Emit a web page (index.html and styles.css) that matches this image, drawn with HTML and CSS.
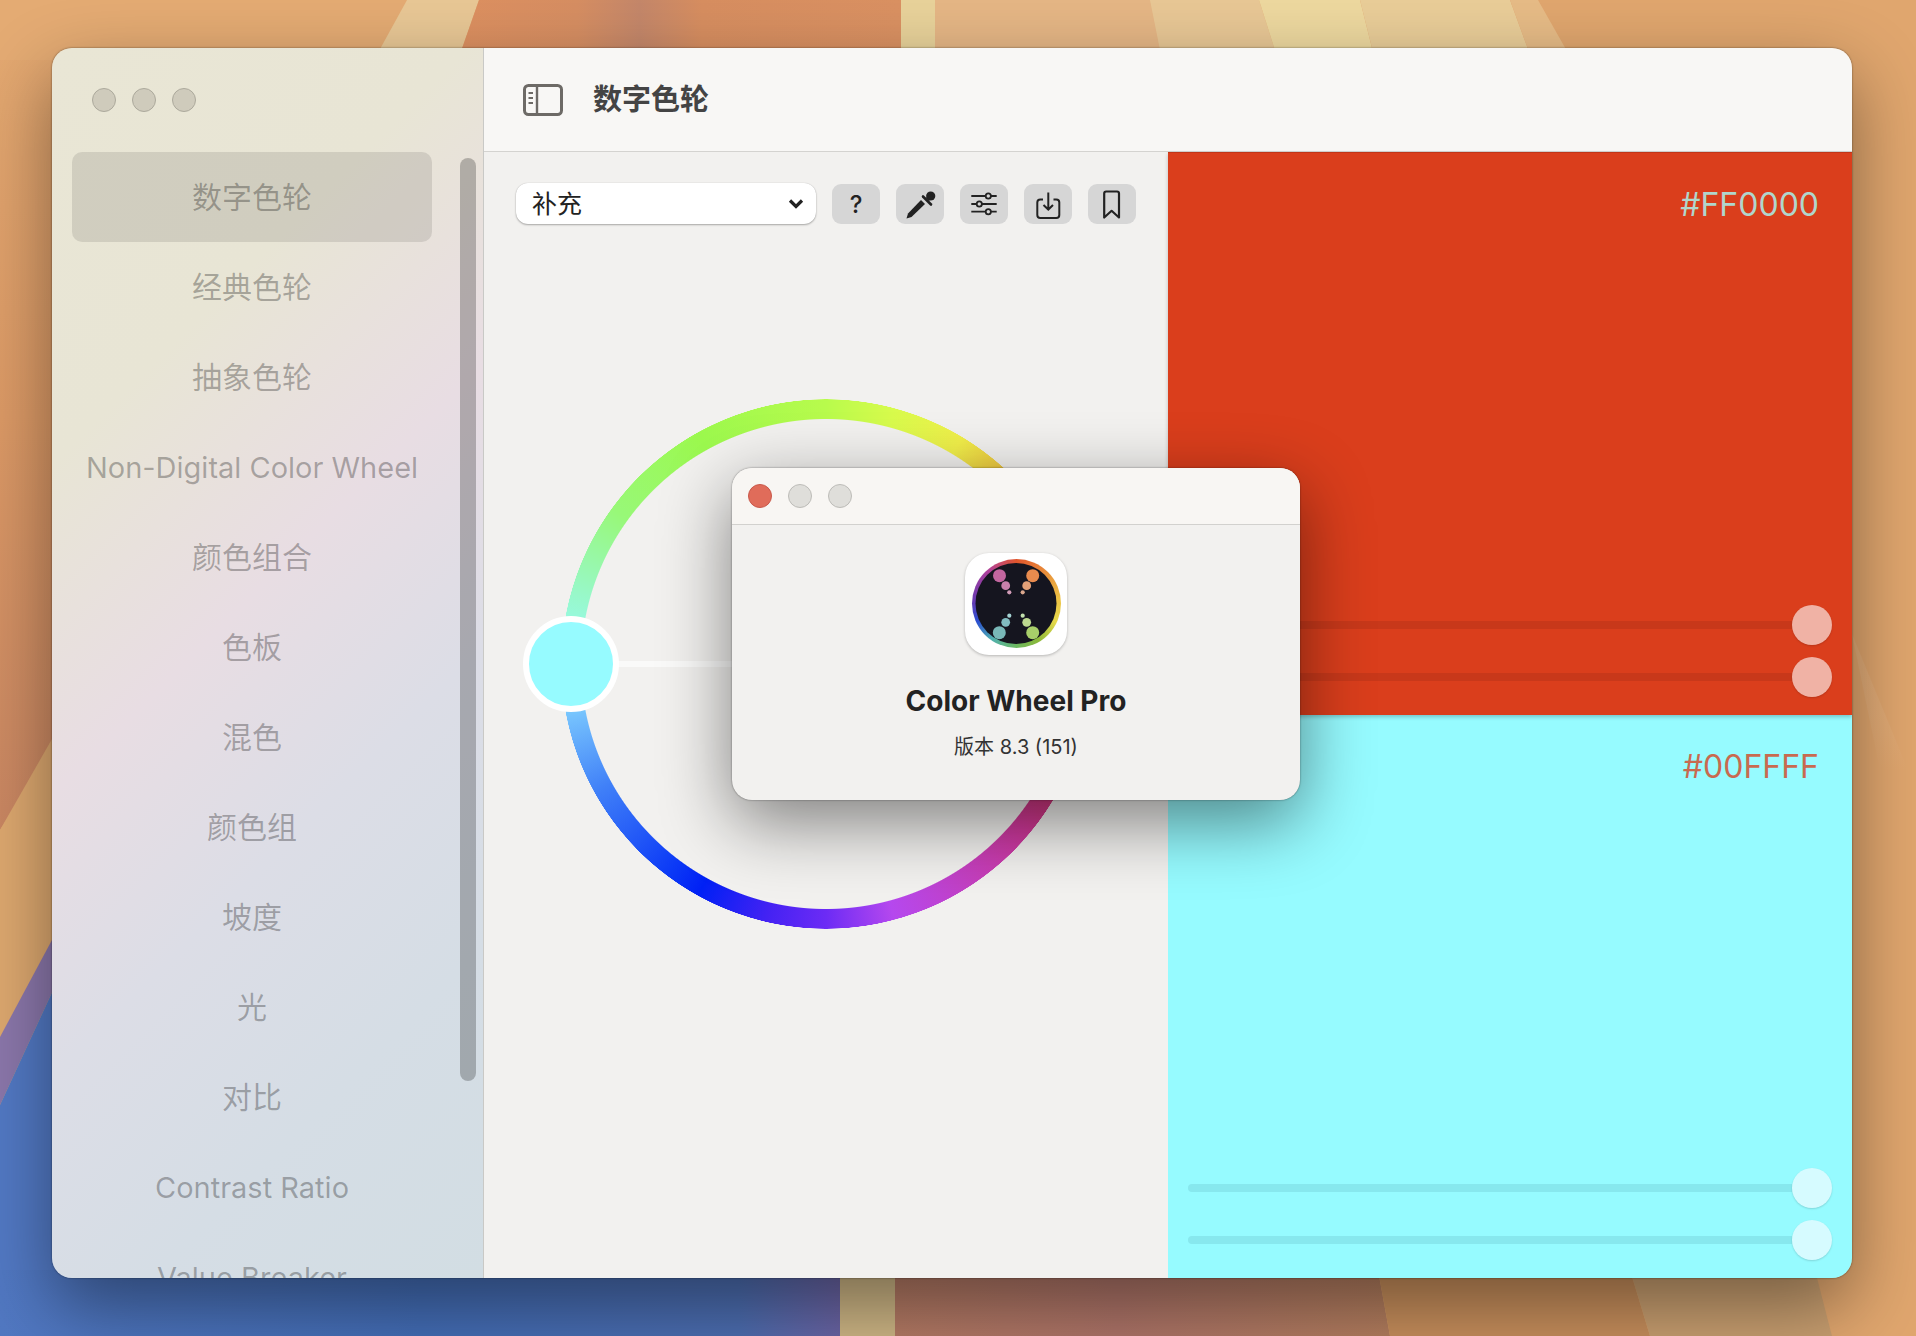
FILE: index.html
```html
<!DOCTYPE html>
<html lang="zh">
<head>
<meta charset="utf-8">
<title>Color Wheel Pro</title>
<link rel="stylesheet" href="styles.css">
</head>
<body>
<svg class="wallpaper" viewBox="0 0 1916 1336" aria-hidden="true">
  <defs>
    <linearGradient id="wpLeft" x1="0" y1="0" x2="0" y2="1"><stop offset="0" stop-color="#e4aa72"/><stop offset="0.5" stop-color="#dc9a66"/><stop offset="1" stop-color="#c98662"/></linearGradient>
    <linearGradient id="wpRed" x1="0" y1="0" x2="1" y2="0"><stop offset="0" stop-color="#dd9060"/><stop offset="0.27" stop-color="#d68e62"/><stop offset="0.41" stop-color="#c4876a"/><stop offset="0.55" stop-color="#d78e60"/><stop offset="1" stop-color="#da9162"/></linearGradient>
    <linearGradient id="wpBlue" x1="0" y1="0" x2="1" y2="0"><stop offset="0" stop-color="#5178c2"/><stop offset="0.5" stop-color="#436db6"/><stop offset="0.88" stop-color="#4c6db0"/><stop offset="1" stop-color="#6a64a4"/></linearGradient>
    <linearGradient id="wpBrown" x1="0" y1="0" x2="1" y2="0"><stop offset="0" stop-color="#b47a64"/><stop offset="0.45" stop-color="#ae7468"/><stop offset="1" stop-color="#b47e5e"/></linearGradient>
    <linearGradient id="wpStreak" x1="0" y1="0" x2="0" y2="1"><stop offset="0" stop-color="#e6b98c" stop-opacity=".35"/><stop offset="0.6" stop-color="#e6b98c" stop-opacity=".25"/><stop offset="1" stop-color="#e6b98c" stop-opacity="0"/></linearGradient>
  </defs>
  <rect width="1916" height="1336" fill="#e0a66e"/>
  <polygon points="0,0 60,0 60,734 0,830" fill="url(#wpLeft)"/>
  <polygon points="0,0 407,0 379,60 0,60" fill="#e4ab73"/>
  <polygon points="407,0 479,0 458,60 374,60" fill="#e8c795"/>
  <polygon points="479,0 901,0 901,60 458,60" fill="url(#wpRed)"/>
  <rect x="901" y="0" width="34" height="60" fill="#e8d29a"/>
  <rect x="935" y="0" width="225" height="60" fill="#e5b685"/>
  <polygon points="1150,0 1259,0 1278,60 1162,60" fill="#e8c795"/>
  <polygon points="1259,0 1360,0 1375,60 1278,60" fill="#edd89f"/>
  <polygon points="1360,0 1510,0 1532,60 1375,60" fill="#e9cd98"/>
  <polygon points="1510,0 1538,0 1572,60 1532,60" fill="#e6bb86"/>
  <polygon points="0,830 60,725 60,925 0,1037" fill="#dda86f"/>
  <polygon points="0,1037 60,925 60,975 0,1105" fill="#8b77ab"/>
  <polygon points="0,1105 60,975 60,1336 0,1336" fill="#5279c4"/>
  <polygon points="0,1270 840,1270 840,1336 0,1336" fill="url(#wpBlue)"/>
  <rect x="840" y="1270" width="55" height="66" fill="#ceb685"/>
  <polygon points="895,1270 1378,1270 1390,1336 895,1336" fill="url(#wpBrown)"/>
  <polygon points="1378,1270 1630,1270 1650,1336 1390,1336" fill="#c88f5c"/>
  <polygon points="1630,1270 1815,1270 1832,1336 1650,1336" fill="#c99f70"/>
  <polygon points="1852,634 1908,770 1880,770" fill="url(#wpStreak)"/>
</svg>

<main class="window">
  <aside class="sidebar">
    <div class="sidebar-lights">
      <span class="light light-side"></span>
      <span class="light light-side"></span>
      <span class="light light-side"></span>
    </div>
    <nav class="nav">
      <div class="nav-item nav-cjk nav-item-active">数字色轮</div>
      <div class="nav-item nav-cjk">经典色轮</div>
      <div class="nav-item nav-cjk">抽象色轮</div>
      <div class="nav-item nav-latin">Non-Digital Color Wheel</div>
      <div class="nav-item nav-cjk">颜色组合</div>
      <div class="nav-item nav-cjk">色板</div>
      <div class="nav-item nav-cjk">混色</div>
      <div class="nav-item nav-cjk">颜色组</div>
      <div class="nav-item nav-cjk">坡度</div>
      <div class="nav-item nav-cjk">光</div>
      <div class="nav-item nav-cjk">对比</div>
      <div class="nav-item nav-latin">Contrast Ratio</div>
      <div class="nav-item nav-latin">Value Breaker</div>
    </nav>
    <div class="scrollbar"></div>
  </aside>

  <section class="content">
    <header class="topbar">
      <svg class="sidebar-toggle" viewBox="0 0 40 32" aria-hidden="true">
        <rect x="1.5" y="1.5" width="37" height="29" rx="4" fill="none" stroke="#6d6a66" stroke-width="3"/>
        <path d="M14 2V30" stroke="#6d6a66" stroke-width="2.4"/>
        <path d="M5.5 9H10M5.5 14H10M5.5 19H10" stroke="#6d6a66" stroke-width="2"/>
      </svg>
      <h1 class="title">数字色轮</h1>
    </header>

    <div class="workspace">
      <div class="wheel-pane">
        <div class="toolbar">
          <div class="select">
            <span class="select-label">补充</span>
            <svg class="chevron" viewBox="0 0 16 10" aria-hidden="true"><path d="M2 1.5L8 7.5L14 1.5" fill="none" stroke="#222" stroke-width="3.2"/></svg>
          </div>
          <div class="tool tool-help">?</div>
          <div class="tool">
            <svg class="tool-icon" viewBox="0 0 48 40" aria-hidden="true">
              <circle cx="34.7" cy="12" r="4.6" fill="#222"/>
              <path d="M27 12.5L35 20.5" stroke="#222" stroke-width="2.6" stroke-linecap="round"/>
              <path d="M25 16L12 29.5L10.5 34.5L15.5 33L29 20Z" fill="#222"/>
              <path d="M32 12L35 15" stroke="#222" stroke-width="6"/>
            </svg>
          </div>
          <div class="tool">
            <svg class="tool-icon" viewBox="0 0 48 40" aria-hidden="true">
              <g fill="#d6d6d6" stroke="#222" stroke-width="1.8">
                <path d="M11.3 12H36.7M11.3 20H36.7M11.3 27.7H36.7" fill="none"/>
                <circle cx="28.3" cy="12" r="2.6"/>
                <circle cx="19.3" cy="20" r="2.6"/>
                <circle cx="28.3" cy="27.7" r="2.6"/>
              </g>
            </svg>
          </div>
          <div class="tool">
            <svg class="tool-icon" viewBox="0 0 48 40" aria-hidden="true">
              <g fill="none" stroke="#222" stroke-width="2">
                <path d="M19 15.5H16.3a3 3 0 0 0-3 3V31a3 3 0 0 0 3 3H32.3a3 3 0 0 0 3-3V18.5a3 3 0 0 0-3-3H29.5"/>
                <path d="M24.3 8.5V25.5M19.5 21L24.3 25.5L29 21"/>
              </g>
            </svg>
          </div>
          <div class="tool">
            <svg class="tool-icon" viewBox="0 0 48 40" aria-hidden="true">
              <path d="M16.2 33.5V9.5a2 2 0 0 1 2-2H29a2 2 0 0 1 2 2V33.5L23.6 26.8Z" fill="none" stroke="#222" stroke-width="2.2" stroke-linejoin="round"/>
            </svg>
          </div>
        </div>

        <div class="wheel">
          <div class="ring"></div>
          <div class="spoke"></div>
          <div class="handle"></div>
        </div>
      </div>

      <div class="swatches">
        <section class="swatch swatch-red">
          <div class="hex hex-red">#FF0000</div>
          <div class="sliders">
            <div class="slider"><div class="track track-red"></div><div class="thumb thumb-red"></div></div>
            <div class="slider"><div class="track track-red"></div><div class="thumb thumb-red"></div></div>
          </div>
        </section>
        <section class="swatch swatch-cyan">
          <div class="hex hex-cyan">#00FFFF</div>
          <div class="sliders">
            <div class="slider"><div class="track track-cyan"></div><div class="thumb thumb-cyan"></div></div>
            <div class="slider"><div class="track track-cyan"></div><div class="thumb thumb-cyan"></div></div>
          </div>
        </section>
      </div>
    </div>
  </section>

  <div class="about">
    <div class="about-bar">
      <span class="light light-close"></span>
      <span class="light light-idle"></span>
      <span class="light light-idle"></span>
    </div>
    <div class="about-body">
      <div class="app-icon">
        <div class="app-ring"></div>
        <svg class="app-face" viewBox="0 0 102 102" aria-hidden="true">
          <circle cx="51" cy="50.5" r="40.5" fill="#15151f"/>
          <circle cx="34.5" cy="22.7" r="6.5" fill="#c2669f"/>
          <circle cx="67.7" cy="22.7" r="6.5" fill="#e98b4e"/>
          <circle cx="40.7" cy="32.7" r="4.4" fill="#c880ab"/>
          <circle cx="61.7" cy="32.7" r="4.4" fill="#e2a078"/>
          <circle cx="44.3" cy="39.3" r="2.1" fill="#d29cb8"/>
          <circle cx="57.7" cy="39.3" r="2.1" fill="#dca88f"/>
          <circle cx="44.3" cy="62.7" r="2.1" fill="#a4d2d2"/>
          <circle cx="57.7" cy="62.7" r="2.1" fill="#c2e0ae"/>
          <circle cx="40.7" cy="69.3" r="4.4" fill="#82bcc0"/>
          <circle cx="61.7" cy="69.3" r="4.4" fill="#bcd890"/>
          <circle cx="34.3" cy="79.7" r="6.5" fill="#79b8b8"/>
          <circle cx="67.7" cy="79.7" r="6.5" fill="#a8cf6a"/>
        </svg>
      </div>
      <div class="app-name">Color Wheel Pro</div>
      <div class="app-version">版本 8.3 (151)</div>
    </div>
  </div>
</main>
</body>
</html>
```
FILE: styles.css
```css
* { box-sizing: border-box; }

html, body { margin: 0; height: 100%; }

body {
  position: relative;
  width: 1916px;
  height: 1336px;
  padding: 48px 64px 58px 52px;
  overflow: hidden;
  background: #e0a66e;
  font-family: Inter, "Noto Sans CJK SC", sans-serif;
}

.wallpaper { position: absolute; inset: 0; width: 1916px; height: 1336px; }

body::before {
  content: "";
  position: absolute;
  z-index: 1;
  left: 52px; top: 48px; width: 1800px; height: 1230px;
  border-radius: 20px;
  box-shadow: 0 28px 72px rgba(0, 0, 0, .42), 0 0 2px rgba(0, 0, 0, .55);
}

.window {
  position: relative;
  z-index: 2;
  display: flex;
  height: 100%;
  border-radius: 20px;
  overflow: hidden;
}

.sidebar {
  position: relative;
  flex: 0 0 432px;
  overflow: hidden;
  border-right: 1px solid #c9c9c6;
  background: linear-gradient(135deg, #e9e6d5 0%, #e8e5d5 25%, #e8dde3 45%, #dcdde6 62%, #d5dde5 80%, #d2dde3 100%);
}

.sidebar-lights, .about-bar { display: flex; align-items: center; gap: 16px; }
.sidebar-lights { height: 104px; padding-left: 40px; }

.light { width: 24px; height: 24px; border-radius: 50%; }
.light-side { background: #cfcbbc; border: 1px solid #aca99c; }
.light-close { background: #e06c5a; border: 1px solid #c9584a; }
.light-idle { background: #dfdeda; border: 1px solid #bdbcb8; }

.nav { width: 380px; padding-left: 20px; }

.nav-item {
  display: flex;
  align-items: center;
  justify-content: center;
  height: 90px;
  border-radius: 10px;
  color: rgba(0, 0, 0, .29);
  white-space: nowrap;
}
.nav-cjk { padding-bottom: 5px; font-size: 30px; }
.nav-latin { font-size: 29px; }
.nav-item-active { background: rgba(0, 0, 0, .1); }

.scrollbar {
  position: absolute;
  left: 408px; top: 110px;
  width: 16px; height: 923px;
  border-radius: 8px;
  background: rgba(0, 0, 0, .24);
}

.content { flex: 1; display: flex; flex-direction: column; min-width: 0; }

.topbar {
  flex: 0 0 104px;
  display: flex;
  align-items: center;
  padding-left: 39px;
  background: #f8f7f5;
  border-bottom: 1px solid #d4d3d0;
}
.sidebar-toggle { width: 40px; height: 32px; }
.title { margin: 0 0 5px 30px; font-size: 29px; font-weight: 700; color: #444; }

.workspace { flex: 1; display: flex; min-height: 0; }

.wheel-pane {
  flex: 0 0 684px;
  display: flex;
  flex-direction: column;
  padding: 31px 32px 0;
  background: #f2f1ef;
}

.toolbar { display: flex; align-items: flex-start; gap: 16px; }

.select {
  display: flex;
  align-items: center;
  justify-content: space-between;
  width: 300px; height: 41px;
  padding: 0 12px 0 16px;
  border-radius: 12px;
  background: #fff;
  box-shadow: 0 1px 2px rgba(0, 0, 0, .3), 0 0 1px rgba(0, 0, 0, .2);
  color: #222;
  font-size: 25px;
}
.select-label { margin-bottom: 4px; }
.chevron { width: 16px; height: 10px; }

.tool {
  display: flex;
  align-items: center;
  justify-content: center;
  width: 48px; height: 40px;
  margin-top: 1px;
  border-radius: 9px;
  background: #d6d6d6;
}
.tool-help { color: #222; font-size: 24px; font-weight: 500; }
.tool-icon { width: 48px; height: 40px; }

.wheel { position: relative; align-self: center; width: 530px; height: 530px; margin-top: 175px; }

.ring {
  position: absolute;
  inset: 0;
  border-radius: 50%;
  background: conic-gradient(#b8fb4c 0deg, #d8fb4c 15deg, #f2f04a 31deg, #f0c840 42deg, #f09a3a 62deg, #e03a20 90deg, #d0389a 130deg, #b548ee 165deg, #6c2bf5 180deg, #4422f3 193deg, #0020f5 209deg, #0c3af6 217deg, #4080f8 241deg, #74c0fd 258deg, #96fbff 270deg, #98f8c8 286deg, #98f878 306deg, #9cf94e 331deg, #b8fb4c 360deg);
  -webkit-mask: radial-gradient(closest-side, transparent 244.5px, #000 245.5px, #000 264.5px, transparent 265px);
  mask: radial-gradient(closest-side, transparent 244.5px, #000 245.5px, #000 264.5px, transparent 265px);
}

.spoke {
  position: absolute;
  left: 50px; top: 262px;
  width: 215px; height: 6px;
  background: #fafaf9;
}

.handle {
  position: absolute;
  left: -38px; top: 217px;
  width: 96px; height: 96px;
  border: 6px solid #fff;
  border-radius: 50%;
  background: #96fbff;
}

.swatches { flex: 1; display: flex; flex-direction: column; }

.swatch {
  flex: 0 0 563px;
  display: flex;
  flex-direction: column;
  justify-content: space-between;
  padding: 29px 20px 18px;
}
.swatch-red {
  position: relative;
  z-index: 1;
  border-top: 1px solid #c23517;
  background: #da3e1c;
  box-shadow: 0 2px 4px rgba(0, 0, 0, .22);
}
.swatch-cyan { background: #96fbff; }

.hex { padding-right: 13px; text-align: right; font-size: 32px; line-height: 46px; }
.hex-red { color: #b0d6cc; }
.hex-cyan { color: #c86a50; }

.sliders { display: flex; flex-direction: column; gap: 12px; }
.slider { display: flex; align-items: center; height: 40px; }
.track { flex: 1; height: 8px; border-radius: 4px 0 0 4px; }
.track-red { background: #c8381a; }
.track-cyan { background: #87e8ee; }
.thumb { width: 40px; height: 40px; border-radius: 50%; box-shadow: 0 1px 2px rgba(0, 0, 0, .15); }
.thumb-red { background: #f0b2a5; }
.thumb-cyan { background: #d6fbff; }

.about {
  position: absolute;
  left: 680px; top: 420px;
  z-index: 5;
  display: flex;
  flex-direction: column;
  width: 568px; height: 332px;
  border-radius: 20px;
  background: #f2f1ef;
  box-shadow: 0 22px 70px rgba(0, 0, 0, .48), 0 0 2px rgba(0, 0, 0, .5);
}

.about-bar {
  flex: 0 0 57px;
  padding-left: 16px;
  border-radius: 20px 20px 0 0;
  background: #f8f6f3;
  border-bottom: 1px solid #d2d1ce;
}

.about-body { flex: 1; display: flex; flex-direction: column; align-items: center; padding-top: 28px; }

.app-icon {
  position: relative;
  width: 102px; height: 102px;
  border-radius: 24px;
  background: #fff;
  box-shadow: 0 1px 3px rgba(0, 0, 0, .25);
}
.app-ring {
  position: absolute;
  left: 6.5px; top: 5.5px;
  width: 89px; height: 89px;
  border-radius: 50%;
  background: conic-gradient(#e0552c 0deg, #e88a3a 40deg, #ecc244 85deg, #e6d84a 115deg, #8ab83a 150deg, #6cb860 180deg, #50b0b0 215deg, #2a4fd0 245deg, #6a3ab0 275deg, #b0409a 320deg, #e0552c 360deg);
}
.app-face { position: absolute; inset: 0; width: 102px; height: 102px; }

.app-name { margin-top: 29px; color: #222; font-size: 28px; font-weight: 700; line-height: 34px; }
.app-version { margin-top: 15px; color: #333; font-size: 20px; line-height: 28px; }
```
